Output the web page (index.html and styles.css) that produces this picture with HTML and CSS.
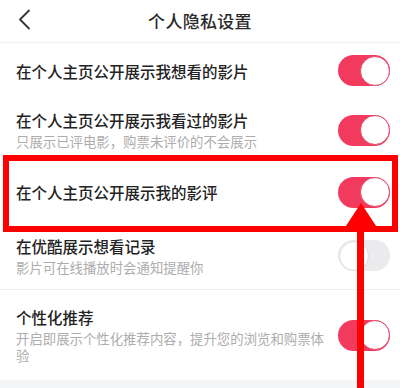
FILE: index.html
```html
<!DOCTYPE html>
<html lang="zh">
<head>
<meta charset="utf-8">
<link rel="stylesheet" href="styles.css">
</head>
<body>
<div class="page">
  <header class="header">
    <svg class="back" width="14" height="22" viewBox="0 0 14 22"><polyline points="11,1.5 2,10.5 11,19.5" fill="none" stroke="#333" stroke-width="1.8" stroke-linejoin="round" stroke-linecap="round"/></svg>
    <h1 class="title">个人隐私设置</h1>
  </header>
  <div class="list">
    <div class="row row-1">
      <div class="text"><div class="name">在个人主页公开展示我想看的影片</div></div>
      <div class="switch on"><span class="knob"></span></div>
    </div>
    <div class="row row-2">
      <div class="text"><div class="name">在个人主页公开展示我看过的影片</div><div class="desc">只展示已评电影，购票未评价的不会展示</div></div>
      <div class="switch on"><span class="knob"></span></div>
    </div>
    <div class="row row-3">
      <div class="text"><div class="name">在个人主页公开展示我的影评</div></div>
      <div class="switch on"><span class="knob"></span></div>
    </div>
    <div class="row row-4 sep">
      <div class="text"><div class="name">在优酷展示想看记录</div><div class="desc">影片可在线播放时会通知提醒你</div></div>
      <div class="switch off"><span class="knob"></span></div>
    </div>
    <div class="row row-5">
      <div class="text narrow"><div class="name">个性化推荐</div><div class="desc">开启即展示个性化推荐内容，提升您的浏览和购票体验</div></div>
      <div class="switch on"><span class="knob"></span></div>
    </div>
  </div>
  <div class="footer"></div>
  <div class="highlight"></div>
  <svg class="arrow" width="400" height="388" viewBox="0 0 400 388">
    <polygon points="361,203 342,232 380,232" fill="#ff0000"/>
    <rect x="357" y="228" width="7" height="160" fill="#ff0000"/>
  </svg>
</div>
</body>
</html>
```
FILE: styles.css
```css
* { box-sizing: border-box; margin: 0; padding: 0; }
html, body { width: 400px; height: 388px; overflow: hidden; background: #fff; }
body { font-family: "Noto Sans CJK SC", "Noto Sans", sans-serif; color: #222; }
.page { position: relative; width: 400px; height: 388px; display: flex; flex-direction: column; }
.header { height: 43px; border-bottom: 1px solid #f1f1f3; display: flex; align-items: center; justify-content: center; position: relative; }
.back { position: absolute; left: 18px; top: 9px; }
.title { font-size: 17px; font-weight: 500; color: #2a2a2a; letter-spacing: 0.3px; margin-top: -2px; }
.list { display: flex; flex-direction: column; }
.row { display: flex; align-items: center; justify-content: space-between; padding: 0 10px 0 16px; }
.row-1 { height: 55px; }
.row-2 { height: 64px; }
.row-3 { height: 60px; }
.row-4 { height: 68px; }
.row-5 { height: 90px; }
.sep { border-bottom: 1px solid #f0f0f2; }
.text { display: flex; flex-direction: column; }
.narrow { width: 312px; }
.name { font-size: 15.5px; font-weight: 500; line-height: 20px; color: #232323; }
.desc { font-size: 13.4px; line-height: 17px; color: #adadad; margin-top: 3px; }
.switch { width: 52px; height: 31px; border-radius: 16px; position: relative; flex: none; }
.switch.on { background: #f23a5f; }
.switch.off { background: #ebebed; }
.knob { position: absolute; top: 0.5px; width: 30px; height: 30px; border-radius: 50%; background: #fff; }
.on .knob { right: 0.5px; border: 1.5px solid #e24a6c; }
.off .knob { left: 0.5px; border: 1.5px solid #dcdcdc; }
.footer { flex: 1; background: #f4f5f7; }
.highlight { position: absolute; left: 3px; top: 155px; width: 395px; height: 77px; border: 6px solid #ff0000; }
.arrow { position: absolute; left: 0; top: 0; }
```
